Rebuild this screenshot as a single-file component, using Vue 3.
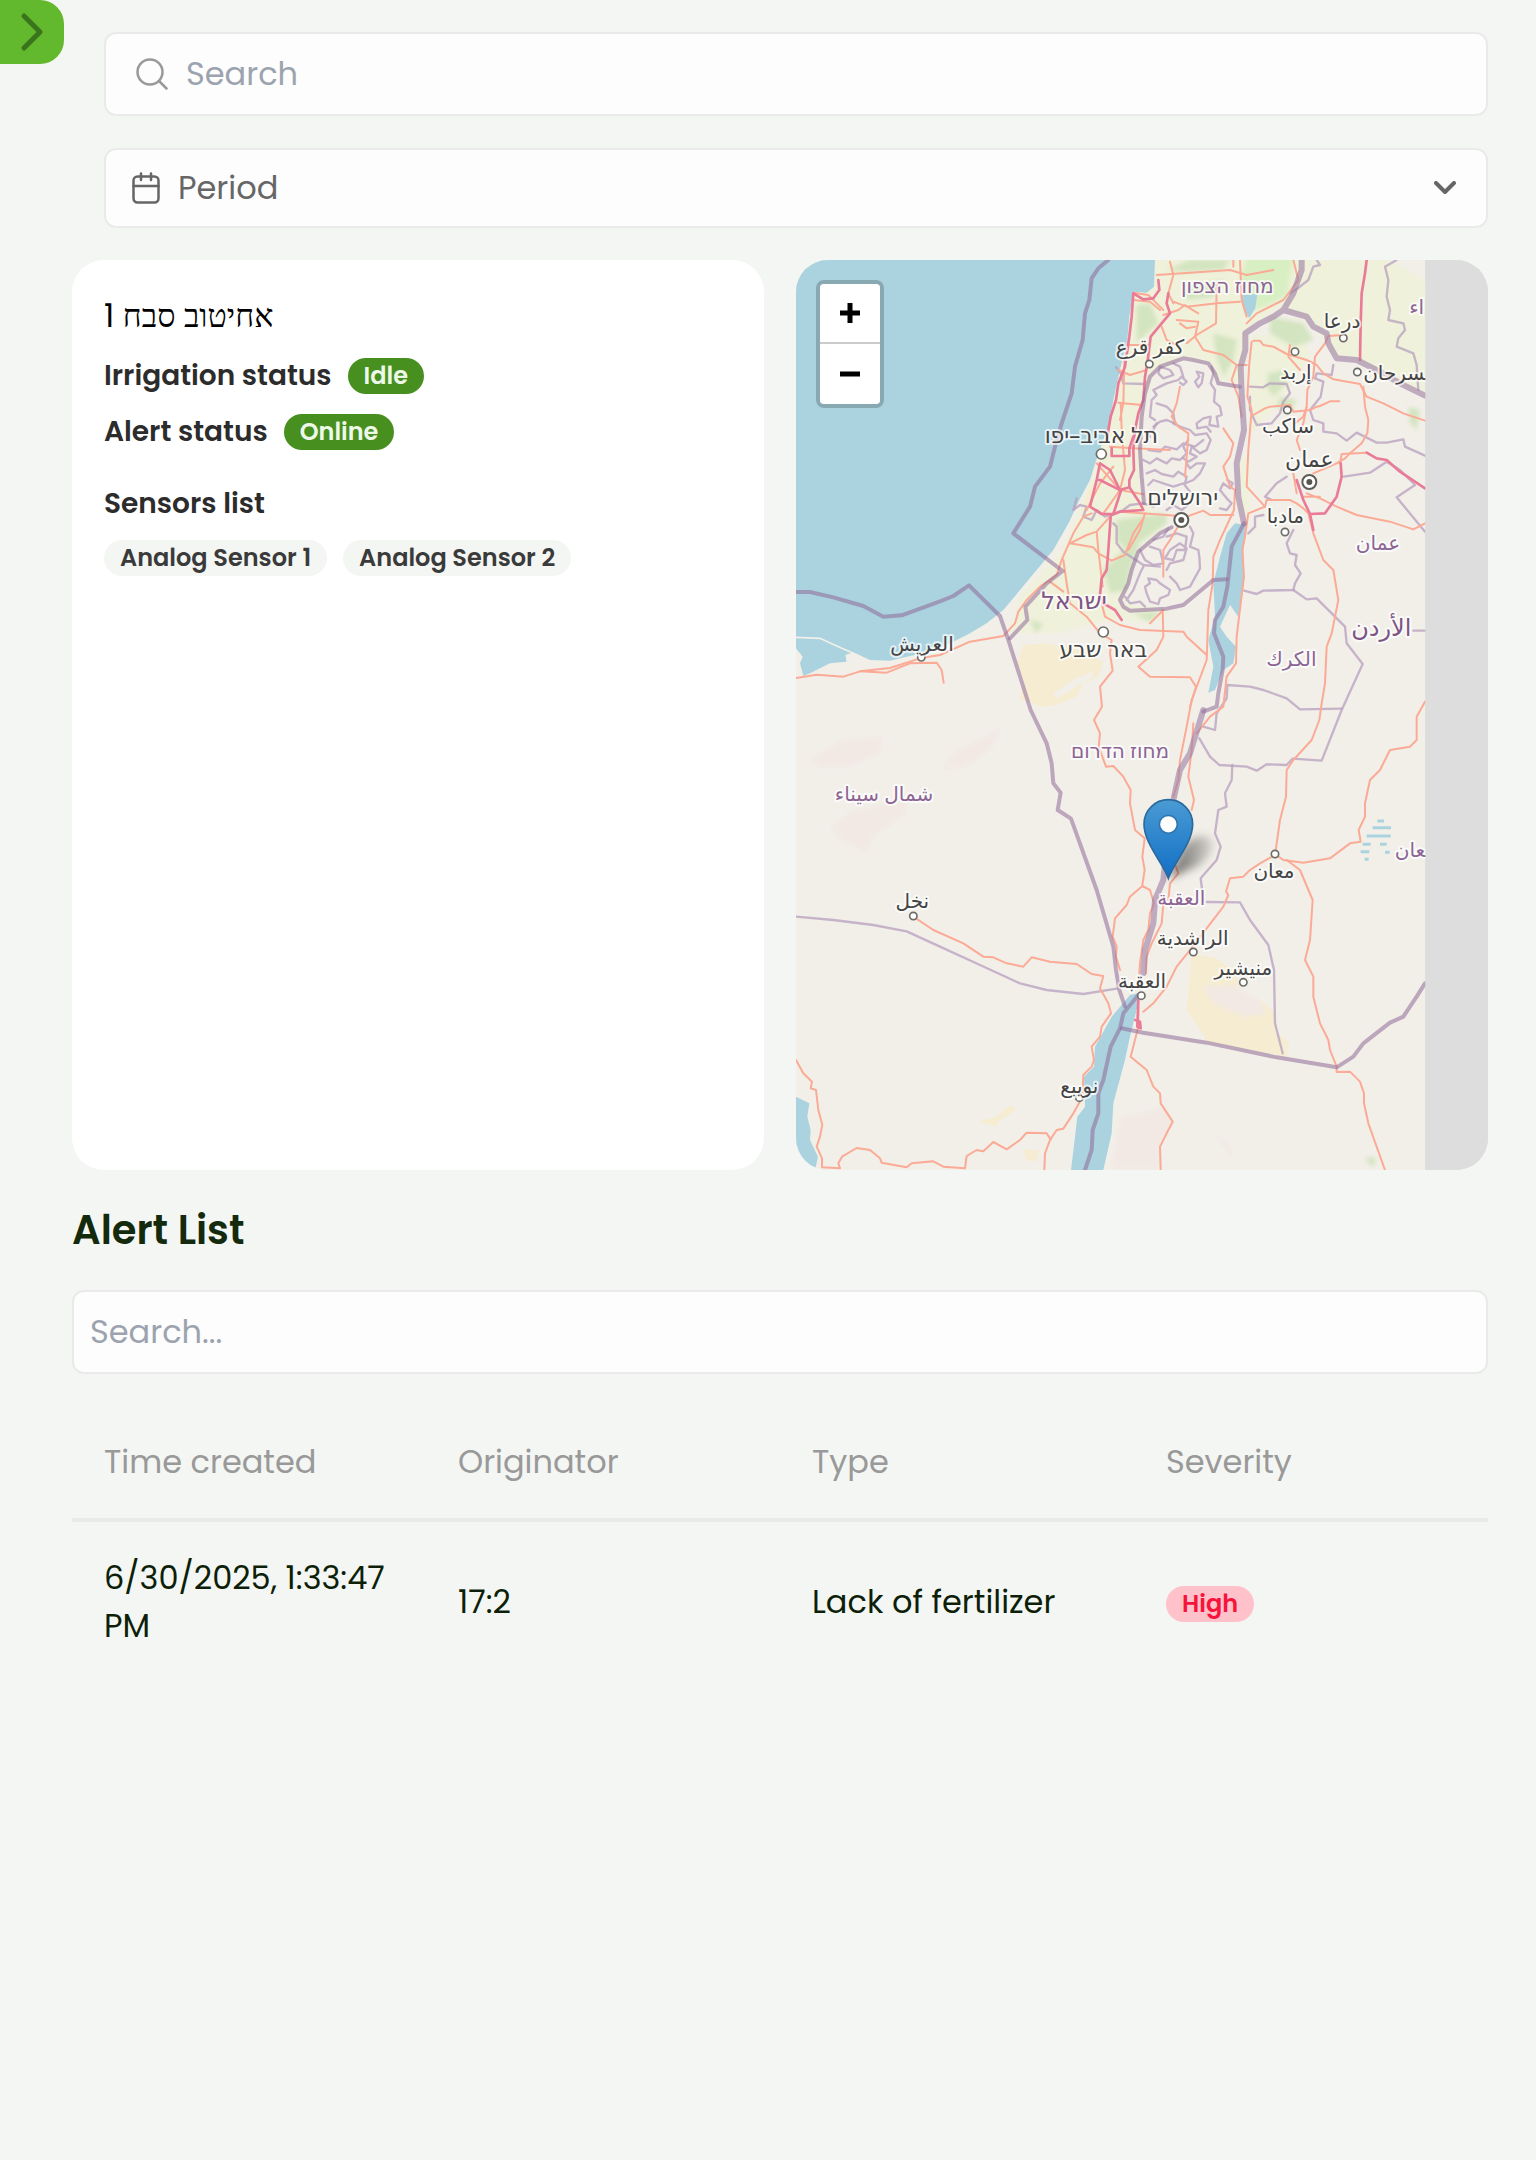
<script setup>
import { ref } from 'vue'

const query = ref('')
const alertQuery = ref('')
const period = ref('')

const sensors = ['Analog Sensor 1', 'Analog Sensor 2']
const columns = ['Time created', 'Originator', 'Type', 'Severity']
const alerts = [
  { time: '6/30/2025, 1:33:47 PM', originator: '17:2', type: 'Lack of fertilizer', severity: 'High' },
]

/* Map geometry, in the map's own drawing units */
const roads = [
  'M18 1284 L80 1274 L160 1280 L210 1264 L300 1254 L390 1225 L450 1215 L540 1175 L640 1158 L675 1120 L685 1085 L710 1050 L750 1010 L800 975 L815 930 L850 850 L880 800 L905 790',
  'M210 1264 L290 1268 L360 1240 L440 1238 L455 1260 L461 1298',
  'M1030 128 L1075 135 L1100 160 L1120 180 M1030 150 L1080 155 L1110 180',
  'M1012 285 L1080 285 M985 360 L1020 375 L1070 360 M1003 330 L1000 460 L990 510 M985 458 L1055 465 M992 460 L996 560 L1005 660 L990 720 L955 770 L940 790',
  'M960 590 L1030 595 L1140 600 M920 640 L990 720 L1060 733 M970 650 L930 700 L890 780 M840 880 L890 855 L920 845 L960 800',
  'M820 930 L830 1000 L840 1060 L890 1100 L930 1150 L965 1170 L960 1210 L968 1262 L930 1310 L936 1370 L912 1410 L930 1450 L926 1490 L948 1550 L970 1548 L1000 1580 L1022 1620 L1020 1660 L1035 1740 L1064 1765 L1057 1820 L1064 1860 L1057 1905',
  'M840 880 L910 892 L925 910 L965 932 L1005 915 L1030 850 L1060 805 M920 845 L925 900 L938 1010 M935 1060 L945 1100 L990 1125 L1050 1140 L1180 1145 L1190 1160 L1250 1215',
  'M780 995 L820 1025 M1080 1120 L1120 1080 M1118 1080 L1120 1160 L1100 1200 L1045 1250 L1080 1280 L1200 1282 L1218 1310 L1200 1370',
  'M1100 75 L1200 68 L1320 60 L1370 75 L1450 60 M1140 35 L1150 75 L1135 130 L1150 160 M1350 30 L1355 150 L1370 200 M1330 50 L1330 30',
  'M1150 155 L1190 170 L1280 160 L1350 155 M1120 195 L1165 180 L1185 165 L1200 175 L1225 190 M1160 210 L1225 215 L1215 260 M1170 220 L1190 235 L1215 230 M1280 100 L1278 220 L1220 255 L1190 280',
  'M1510 30 L1525 90 L1480 150 L1400 190 L1370 220',
  'M1115 230 L1130 270 L1170 290 M1215 260 L1240 300 L1300 315 L1340 345 L1370 345 M1340 345 L1325 390 L1345 440 L1355 500',
  'M1390 272 L1410 272 L1420 285 L1450 290 L1490 312 L1550 330 L1580 345 L1600 370 L1630 388 L1710 402 L1730 440 L1780 460 L1840 490 L1905 512',
  'M1385 275 L1378 340 L1372 440 L1385 480 L1375 600 L1370 710 L1425 770 L1375 790 L1365 860 L1357 900 L1362 980 L1352 1060 L1340 1160 L1338 1240 L1310 1280 L1300 1370 L1260 1400 L1220 1450',
  'M1658 255 L1615 258 L1605 280 L1575 320 L1570 380 L1552 420 L1550 470 L1540 520 L1520 570 L1530 600',
  'M1500 285 L1495 320 L1530 360 M1720 410 L1725 470 L1735 510 L1732 550 L1715 580 L1680 610 L1665 625 L1640 640 L1570 670',
  'M1390 495 L1425 475 L1440 470 L1500 465 L1510 485 L1560 480 L1580 470 L1590 468 L1620 454 L1648 454 M1550 470 L1540 500 L1515 520 M1510 670 L1520 730',
  'M1650 640 L1655 612 L1730 608 M1425 770 L1430 750 L1500 750 L1520 760 L1540 775 L1555 790 M1550 730 L1590 745 L1640 770 L1700 795 L1800 815 L1870 838 L1905 820 M1540 740 L1590 740',
  'M1000 786 L1130 795 L1190 800 L1240 782 L1260 795 L1330 795 M1300 535 L1330 580 L1320 620 L1300 650 L1320 710 L1335 720 L1332 780 L1290 870 L1270 920 L1268 1000 L1255 1080 L1250 1230 L1205 1350 M1205 1350 L1190 1430 L1170 1530 L1165 1590 L1150 1640',
  'M1170 410 L1160 460 L1145 500 L1165 530 L1195 550 L1190 620 L1185 680 M1170 820 L1140 870 L1120 900 L1120 980 M1065 790 L1050 840 L1015 900',
  'M1555 790 L1570 850 L1600 930 L1630 960 L1645 1050 L1625 1150 L1610 1190 L1605 1300 L1595 1360 L1588 1410 L1565 1470 L1510 1530 L1490 1560 L1488 1640 L1470 1710 L1455 1815 L1410 1840 L1380 1860 L1360 1880 L1320 1885 L1308 1925 L1315 1935 L1300 1970 L1250 2035 L1200 2100 L1160 2150 L1130 2210 L1090 2260 L1060 2285',
  'M1905 1355 L1880 1400 L1880 1470 L1860 1490 L1800 1500 L1770 1560 L1740 1590 L1725 1660 L1725 1700 L1706 1740 L1712 1775 L1680 1780 L1620 1825 L1540 1838 L1480 1830 L1455 1812',
  'M1490 1830 L1530 1860 L1568 1950 L1560 2070 L1545 2130 L1570 2180 L1570 2240 L1590 2320 L1615 2370 L1620 2400 L1640 2450 L1640 2466 L1680 2465 L1710 2495 L1722 2530 L1722 2560 L1735 2620 L1785 2760',
  'M370 2000 L430 2040 L520 2080 L580 2120 L610 2122 L650 2140 L700 2150 L725 2122 L780 2135 L860 2142 L905 2172 L940 2178 L930 2215 L955 2260 L963 2290 L935 2330 L930 2360 L905 2390 L912 2430 L905 2450 L880 2475 L878 2540 L850 2590 L820 2636 L800 2640 L780 2670 L765 2710 L763 2760',
  'M18 2430 L40 2470 L66 2495 L62 2515 L78 2520 L85 2580 L97 2625 L90 2660 L80 2690 L96 2725 L96 2752 L150 2755 L145 2740 L156 2720 L200 2694 L240 2700 L270 2725 L275 2738 L350 2752 L365 2740 L430 2734 L460 2750 L525 2755 L530 2718 L560 2700 L580 2704 L610 2676 L650 2698 L690 2670 L710 2648 L770 2650 L782 2668',
  'M1057 1908 L1020 1940 L1010 1965 L975 2005 L968 2060 L980 2090 L978 2120 L990 2160 M1057 1908 L1080 1920 L1092 1960 L1080 1990 L1075 2040 L1060 2070 L1050 2140 L1048 2170',
  'M1210 1420 L1205 1500 L1195 1580 L1212 1650 L1205 1680 M1150 1830 L1165 1870 L1140 1900 L1135 1950 M1120 1960 L1115 2020 L1085 2080 L1070 2120 L1068 2170',
  'M1045 2270 L1045 2330 L1022 2420 L1070 2460 L1090 2510 L1110 2530 L1112 2560 L1148 2615 L1135 2640 L1125 2660 L1110 2690 L1112 2760',
]
const motorways = [
  'M1030 130 L1025 200 L1018 260 L1005 350 L985 400 L978 450 L962 500 L950 570',
  'M1030 130 L1060 148 L1090 145 L1108 120 L1105 90 M930 640 L920 690 L900 770 L935 792 L970 792 L993 722 L930 690 L920 690 M930 640 L960 660 L990 720',
  'M1135 130 L1130 160 L1140 190 L1115 220 L1082 260 L1072 340 L1065 380 L1060 450 L1045 490 L1035 540 L1030 600 L1032 660 L1018 690 L1018 712 L990 720',
  'M1018 712 L1050 760 L1060 780 L990 785 L965 795 M962 800 L955 900 L950 960 L935 985 L930 1035 L940 1060 L975 1080 L995 1110 M965 595 L965 618 L1018 618 L1018 595 L1030 560',
  'M1730 30 L1725 70 L1715 130 L1712 220 L1710 330',
  'M1730 608 L1760 625 L1790 630 L1830 665 L1905 715 M1652 640 L1655 680 L1640 740 L1605 790 L1560 792 L1540 750 L1520 690 M1560 792 L1570 840',
  'M1045 2250 L1042 2330 L1052 2335 L1050 2315 L1036 2310',
]
const thinBorders = [
  'M978 352 L992 370 L1000 400 L1060 402 L1066 395 M860 745 L850 780 L870 765 L890 770 L880 800 L905 810 L920 780 L945 800 L1000 780 L1020 765 L1060 760 M970 820 L980 830 L980 880 L1000 905 L1060 945 L1110 950',
  'M1580 30 L1590 45 L1570 50 L1555 90 L1530 110 L1500 130 M1820 30 L1785 50 L1795 90 L1790 140 L1800 180 L1795 210 L1840 220 L1845 240 L1825 265 L1820 290 L1870 310 L1880 345 L1885 420',
  'M1380 410 L1420 412 L1440 400 L1490 402 L1500 430 L1480 455 L1470 490 L1445 520 L1400 525 L1380 480 L1380 440 M1630 345 L1625 375 L1580 370 L1575 385 L1600 395 L1592 440 L1560 480 L1570 510 L1600 520 L1600 545 L1640 550 L1670 572 L1700 548 L1760 578 L1790 578 L1840 568 L1845 590 L1905 617',
  'M1662 680 L1740 668 L1790 635 L1830 660 L1875 705 L1820 742 L1905 845',
  'M1490 680 L1460 700 L1425 740 L1445 750 M1375 850 L1395 830 L1395 800 L1420 795 M1510 840 L1490 880 L1500 910 L1520 915 L1515 945 L1532 970 L1515 1000 L1510 1020 L1420 1022 L1400 1032 L1362 1022',
  'M1510 1020 L1550 1048 L1580 1045 L1610 1075 L1665 1130 L1670 1180 L1718 1242 L1655 1380 L1595 1532 L1508 1526 L1490 1545 L1430 1543 L1400 1562 L1370 1550 L1288 1545 L1260 1520 L1228 1465',
  'M1870 1142 L1905 1142 M1240 1430 L1275 1440 L1280 1390 L1310 1345 L1312 1305 L1380 1310 L1420 1320 L1490 1345 L1530 1378 L1655 1376',
  'M1327 1545 L1325 1590 L1305 1630 L1310 1670 L1285 1680 L1275 1750 L1292 1790 L1280 1830 L1232 1885 L1240 1950 M1250 1956 L1350 1957 L1380 2010 L1435 2085 L1452 2160 L1455 2320 L1478 2410',
  'M18 2000 L130 2010 L250 2025 L350 2044 L450 2090 L570 2145 L690 2200 L770 2220 L880 2232 L980 2216',
  'M1085 450 L1100 435 L1090 420 L1110 410 L1130 400 L1165 390 L1175 380 L1190 395 L1180 405 L1170 398 M1100 460 L1130 470 L1150 490 L1155 520 L1130 510 L1110 515 L1090 530 M1085 450 L1080 500 L1095 510 M1110 350 L1140 360 L1150 375 L1120 385 L1105 370 Z M1150 340 L1170 350 L1180 380',
  'M1220 365 L1240 370 L1235 400 L1225 412 L1215 395 L1228 380 Z M1265 350 L1270 370 L1262 400 L1275 420 L1272 455 L1290 470 L1295 495 L1280 500 L1285 530 L1258 525 L1262 500 L1240 505 L1220 520 L1222 535 L1250 530 L1262 545',
  'M1150 520 L1170 530 L1200 540 L1215 555 L1250 550 L1262 570 L1250 600 L1230 610 L1205 590 L1200 610 L1220 620 L1195 635 L1180 625',
  'M1080 560 L1070 545 L1090 540 L1100 520 M1060 630 L1080 640 L1100 625 L1130 640 L1145 625 L1170 630 L1190 610 L1180 590 L1195 570 M1075 600 L1110 605 L1125 590 L1160 598 L1180 580 L1215 590 L1240 570',
  'M1070 670 L1095 660 L1115 672 L1150 680 L1165 665 L1190 680 L1185 700 L1210 690 L1230 670 L1245 640 L1220 640 L1200 655 L1190 640 M1075 705 L1090 690 L1120 700 L1150 710 L1180 700 L1200 725',
  'M1312 690 L1328 700 L1320 715 L1300 700 L1290 720 L1310 745 L1325 760 L1310 780 L1290 775 M1130 780 L1150 765 L1175 780 L1200 760 M1060 760 L1090 770 L1110 755',
  'M1200 830 L1210 850 L1200 890 L1225 900 L1228 920 L1230 955 L1200 1010 L1170 1020 L1160 1000 L1140 980 M1050 900 L1065 930 L1090 945 L1120 940 L1110 900 L1080 890 M1090 870 L1120 860 L1135 835',
  'M1130 860 L1160 850 L1190 860 L1185 900 L1160 900 L1150 930 L1125 925 L1140 900 L1170 880 L1190 895 L1180 930 L1140 940 L1130 960',
  'M1065 1010 L1080 1000 L1075 985 L1100 990 L1110 1000 L1140 1020 L1135 1035 L1110 1045 L1105 1062 L1080 1055 L1070 1030 Z M1010 1050 L1030 1020 L1050 970 L1060 950 M1005 1040 L1020 1060 L1050 1055 L1065 1070',
]
const borders = [
  'M955 30 L925 55 L905 85 L898 150 L885 190 L878 270 L855 350 L845 430 L815 520 L795 590 L780 650 L735 710 L720 770 L670 850 L818 963 L770 1000 L706 1070 L712 1110 L660 1165',
  'M18 1026 L60 1026 L130 1042 L220 1068 L280 1100 L335 1096 L450 1054 L490 1038 L537 1006 L630 1098 L655 1170 L722 1380 L770 1480 L785 1540 L790 1600 L812 1628 L803 1680 L843 1706 L920 1920 L970 2090 L978 2160 L988 2220 L1005 2270',
  'M1062 760 L1055 680 L1050 600 L1055 500 L1065 430 L1080 380 L1110 350 L1180 325 L1210 330 L1255 340 L1275 370 L1285 400 L1350 410',
  'M1145 832 L1110 850 L1045 905 L1025 960 L1015 1000 L990 1050 L1000 1070 L1020 1082 L1130 1076 L1180 1065 L1270 990 L1310 988',
  'M1045 2235 L1000 2290 L990 2335 L962 2390 L940 2490 L925 2530 L925 2590 L908 2640 L905 2700 L885 2760',
  'M995 2335 L1060 2348 L1250 2378 L1460 2422 L1640 2452 L1690 2420 L1720 2380 L1800 2318 L1840 2300 L1880 2240 L1905 2200',
]
const riverBorder =
  'M1535 30 L1535 60 L1510 130 L1480 180 L1450 200 L1410 220 L1366 250 L1366 300 L1352 350 L1355 430 L1362 540 L1340 640 L1345 740 L1362 820 M1480 180 L1550 200 L1570 230 L1610 250 L1615 280 L1640 325 L1700 330 L1780 370 L1830 400 L1905 437 M1240 1380 L1200 1510 L1170 1560 L1150 1650 L1130 1790 L1120 1890 L1095 1950 L1090 2020 L1065 2100 L1060 2170'
const seaBorder =
  'M1362 820 L1325 890 L1312 1010 L1300 1070 L1275 1110 L1272 1150 L1300 1220 L1298 1260 L1285 1330 L1280 1370 L1240 1385'

const places = [
  { name: 'מחוז הצפון', x: 1312, y: 130, kind: 'region' },
  { name: 'درعا', x: 1656, y: 235, kind: 'town' },
  { name: 'اء', x: 1880, y: 192, kind: 'region' },
  { name: 'كفر قرع', x: 1080, y: 312, kind: 'town' },
  { name: 'إربد', x: 1518, y: 388, kind: 'town' },
  { name: 'السرحان', x: 1830, y: 390, kind: 'town' },
  { name: 'ساكب', x: 1494, y: 548, kind: 'town' },
  { name: 'תל אביב–יפו', x: 934, y: 580, kind: 'city' },
  { name: 'عمان', x: 1558, y: 652, kind: 'city' },
  { name: 'ירושלים', x: 1178, y: 764, kind: 'city' },
  { name: 'مادبا', x: 1486, y: 820, kind: 'town' },
  { name: 'عمان', x: 1764, y: 900, kind: 'region' },
  { name: 'ישראל', x: 852, y: 1078, kind: 'country' },
  { name: 'الأردن', x: 1774, y: 1158, kind: 'country' },
  { name: 'באר שבע', x: 940, y: 1222, kind: 'city' },
  { name: 'العريش', x: 396, y: 1204, kind: 'town' },
  { name: 'الكرك', x: 1504, y: 1248, kind: 'region' },
  { name: 'מחוז הדרום', x: 990, y: 1524, kind: 'region' },
  { name: 'شمال سيناء', x: 282, y: 1654, kind: 'region' },
  { name: 'معان', x: 1452, y: 1884, kind: 'town' },
  { name: 'معان', x: 1876, y: 1822, kind: 'region' },
  { name: 'العقبة', x: 1174, y: 1964, kind: 'region' },
  { name: 'نخل', x: 367, y: 1974, kind: 'town' },
  { name: 'الراشدية', x: 1208, y: 2084, kind: 'town' },
  { name: 'منيشير', x: 1360, y: 2174, kind: 'town' },
  { name: 'العقبة', x: 1056, y: 2214, kind: 'town' },
  { name: 'نويبع', x: 868, y: 2528, kind: 'town' },
]
const dots = [
  [1660, 264, 11], [1515, 305, 11], [1078, 342, 11], [1702, 366, 11], [1492, 480, 11],
  [934, 612, 15], [1485, 846, 11], [940, 1146, 15], [394, 1222, 11], [1455, 1812, 11],
  [370, 1998, 11], [1210, 2106, 11], [1360, 2197, 11], [1054, 2237, 11], [868, 2543, 11],
]
const capitals = [[1558, 696], [1174, 810]]
const woods = [
  'M1040 165 L1080 160 L1105 220 L1070 250 L1040 280 Z',
  'M1130 60 L1200 30 L1320 30 L1300 60 L1180 65 Z',
  'M1180 110 L1300 90 L1270 140 L1190 150 Z',
  'M940 960 L1000 900 L1050 880 L1020 960 L1010 1020 L960 1030 Z',
  'M980 810 L1130 790 L1130 820 L1060 870 L1010 900 L980 870 Z',
  'M1440 200 L1540 220 L1570 270 L1510 290 L1440 250 Z',
  'M1435 370 L1480 360 L1490 400 L1450 440 L1430 410 Z',
  'M1470 440 L1520 450 L1500 490 L1460 470 Z',
  'M1270 250 L1340 270 L1330 330 L1300 380 L1280 320 Z',
  'M1030 1090 L1110 1085 L1080 1115 Z',
  'M1855 470 L1890 480 L1880 540 L1860 520 Z',
  'M1725 2725 L1758 2720 L1750 2755 Z',
  'M720 1110 L760 1120 L740 1150 Z',
]
</script>

<template>
  <main class="page">
    <button class="drawer-toggle" type="button" aria-label="Open menu">
      <svg viewBox="0 0 64 64" width="64" height="64" aria-hidden="true">
        <path d="M24 16 L40 32 L24 48" />
      </svg>
    </button>

    <div class="filters">
      <label class="field">
        <svg class="icon-search" viewBox="0 0 64 64" aria-hidden="true">
          <circle cx="28" cy="28" r="25" />
          <path d="M46 46 L61 61" />
        </svg>
        <input v-model="query" type="text" placeholder="Search" aria-label="Search" />
      </label>
      <label class="field field-select">
        <svg class="icon-calendar" viewBox="0 0 56 64" aria-hidden="true">
          <rect x="3" y="9" width="50" height="52" rx="8" />
          <path d="M3 28 H53 M18 3 V16 M38 3 V16" />
        </svg>
        <select v-model="period" aria-label="Period">
          <option value="">Period</option>
        </select>
        <svg class="icon-chevron" viewBox="0 0 22 14" aria-hidden="true">
          <path d="M2 2 L11 11 L20 2" />
        </svg>
      </label>
    </div>

    <div class="overview">
      <section class="card">
        <h2 class="device">אחיטוב סבח 1</h2>
        <div class="status"><span>Irrigation status</span><span class="badge badge-ok">Idle</span></div>
        <div class="status"><span>Alert status</span><span class="badge badge-ok">Online</span></div>
        <h3 class="sensors-title">Sensors list</h3>
        <div class="sensors">
          <span v-for="s in sensors" :key="s" class="badge badge-muted">{{ s }}</span>
        </div>
      </section>

      <section class="map" aria-label="Map">
        <svg class="map-canvas" viewBox="18 30 2076 2730" preserveAspectRatio="xMinYMin slice" role="img" aria-label="Device location">
          <defs>
            <linearGradient id="pin" x1="0" y1="0" x2="0" y2="1">
              <stop offset="0" stop-color="#4a9bd3" />
              <stop offset="1" stop-color="#126fc6" />
            </linearGradient>
            <linearGradient id="shade" x1="0" y1="0" x2="1" y2="0">
              <stop offset="0" stop-color="#000" stop-opacity="0.6" />
              <stop offset="1" stop-color="#000" stop-opacity="0.1" />
            </linearGradient>
            <filter id="soft" x="-50%" y="-50%" width="200%" height="200%"><feGaussianBlur stdDeviation="12" /></filter>
            <filter id="haze" x="-20%" y="-20%" width="140%" height="140%"><feGaussianBlur stdDeviation="7" /></filter>
          </defs>
          <rect x="18" y="30" width="1888" height="2730" fill="#f2efe9" />

          <g fill="#eff1da" filter="url(#haze)">
            <path d="M1030 125 L1090 20 L1540 20 L1500 150 L1370 240 L1360 400 L1280 390 L1250 335 L1180 320 L1090 370 L1055 500 L1050 720 L1130 830 L1040 900 L1000 1060 L1150 1080 L1080 1120 L960 1110 L800 1150 L660 1150 L690 1040 L820 900 L900 700 L960 500 Z" />
            <path d="M1540 20 L1780 20 L1905 90 V430 L1800 390 L1700 330 L1640 320 L1570 220 L1480 180 Z" />
            <path d="M1380 260 L1540 240 L1560 320 L1480 440 L1380 560 Z M1345 620 H1375 L1380 800 L1350 790 Z" />
          </g>
          <path d="M1370 20 L1510 20 L1490 140 L1400 180 L1350 100 Z" fill="#d8efc3" filter="url(#haze)" />
          <g fill="#d3e4c0" filter="url(#haze)"><path v-for="d in woods" :key="d" :d="d" /></g>
          <g fill="#f6ecd1">
            <path d="M700 1185 L770 1180 L870 1200 L940 1235 L925 1280 L880 1300 L860 1340 L800 1365 L750 1370 L720 1355 L690 1350 L700 1290 L680 1240 Z" />
            <path d="M1205 2115 L1270 2120 L1330 2160 L1360 2240 L1420 2255 L1455 2290 L1460 2350 L1497 2375 L1490 2420 L1250 2375 L1225 2330 L1190 2280 Z" />
            <path d="M895 720 L920 690 L905 770 L870 800 Z M565 2615 L620 2600 L660 2565 L680 2580 L630 2610 L620 2630 Z M700 2700 L745 2700 L740 2735 L710 2730 Z" />
          </g>
          <path d="M790 1330 L850 1290 L905 1265 L910 1280 L860 1310 L800 1345 Z" fill="#f2efe9" />
          <g fill="#f2e9e4" filter="url(#haze)">
            <path d="M60 1530 L150 1470 L280 1460 L270 1510 L180 1550 L90 1555 Z M450 1560 L500 1500 L640 1430 L600 1500 L530 1550 Z M120 1730 L190 1680 L350 1650 L350 1690 L250 1760 L230 1810 L150 1770 Z" />
            <path d="M990 2600 L1130 2570 L1150 2620 L1110 2690 V2760 H960 Z M1265 2645 L1320 2680 L1330 2730 Z" />
            <path d="M1240 2210 L1330 2205 L1410 2250 L1430 2290 L1360 2300 L1270 2260 Z" />
          </g>

          <g fill="#aad3df">
            <path d="M18 30 H1095 L1092 110 L1070 128 L1030 125 L1018 200 L1012 270 L992 350 L972 440 L955 530 L922 620 L900 690 L868 750 L838 815 L790 900 L740 960 L690 1020 L640 1080 L590 1120 L540 1150 L490 1175 L440 1200 L350 1220 L300 1232 L240 1230 L190 1207 L166 1215 L170 1235 L120 1240 L60 1270 L40 1278 L30 1240 L38 1220 L18 1195 Z" />
            <path d="M1335 820 L1370 825 L1360 900 L1362 1000 L1345 1100 L1320 1065 L1290 1130 L1310 1160 L1338 1190 L1330 1240 L1300 1260 L1275 1320 L1255 1328 L1270 1250 L1255 1170 L1275 1100 L1270 1000 L1290 920 L1310 850 Z" />
            <path d="M1352 135 L1402 132 L1396 175 L1378 204 L1362 182 Z" />
            <path d="M1045 2230 L1020 2235 L965 2300 L915 2390 L912 2450 L882 2480 L885 2570 L862 2600 L855 2660 L843 2760 H940 L965 2650 L970 2560 L1005 2430 L1020 2360 L1042 2270 Z" />
            <path d="M18 2540 L58 2560 L52 2600 L62 2640 L60 2670 L84 2720 L75 2760 H18 Z" />
          </g>
          <path d="M18 1162 L90 1165 L140 1188 L190 1210" fill="none" stroke="#f2efe9" stroke-width="5" />
          <path d="M1762 1713 h20 M1748 1733 h55 M1730 1758 h72 M1718 1783 h24 M1770 1783 h20 M1712 1805 h26 M1785 1807 h14 M1724 1828 h12" stroke="#aad3df" stroke-width="9" fill="none" />

          <g class="lines">
            <path v-for="d in thinBorders" :key="d" :d="d" stroke="#b79fbd" stroke-opacity="0.75" stroke-width="7" />
            <path v-for="d in roads" :key="d" :d="d" stroke="#fbaa95" stroke-width="6" />
            <path v-for="d in motorways" :key="d" :d="d" stroke="#ea7b97" stroke-width="8" />
            <path v-for="d in borders" :key="d" :d="d" stroke="#8f6a98" stroke-opacity="0.55" stroke-width="12" />
            <path :d="riverBorder" stroke="#9c7da3" stroke-opacity="0.6" stroke-width="18" />
            <path :d="seaBorder" stroke="#8f6a98" stroke-opacity="0.55" stroke-width="12" />
          </g>

          <g fill="#fff" stroke="#6d6d68" stroke-width="5">
            <circle v-for="d in dots" :key="d.join()" :cx="d[0]" :cy="d[1]" :r="d[2]" />
          </g>
          <g v-for="c in capitals" :key="c.join()">
            <circle :cx="c[0]" :cy="c[1]" r="21" fill="#fff" stroke="#5d5d58" stroke-width="6" />
            <circle :cx="c[0]" :cy="c[1]" r="9" fill="#575752" />
          </g>
          <text v-for="(p, i) in places" :key="i" :x="p.x" :y="p.y" class="place" :class="p.kind">{{ p.name }}</text>

          <rect x="1906" y="30" width="188" height="2730" fill="#ddd" />

          <path d="M1135 1885 L1180 1790 Q1220 1745 1262 1765 Q1290 1800 1220 1850 Z" fill="url(#shade)" filter="url(#soft)" />
          <path d="M1135 1885 C1120 1840 1062 1780 1062 1722 A73 73 0 0 1 1208 1722 C1208 1780 1150 1840 1135 1885 Z" fill="url(#pin)" stroke="#2b6a9e" stroke-width="5" />
          <circle cx="1135" cy="1723" r="27" fill="#fff" stroke="#2f76b0" stroke-width="5" />
        </svg>
        <div class="zoom">
          <button type="button" aria-label="Zoom in"><svg viewBox="0 0 20 20" aria-hidden="true"><path d="M0 10 H20 M10 0 V20" /></svg></button>
          <button type="button" aria-label="Zoom out"><svg viewBox="0 0 20 20" aria-hidden="true"><path d="M0 10 H20" /></svg></button>
        </div>
      </section>
    </div>

    <section class="alerts">
      <h1>Alert List</h1>
      <div class="field field-alert">
        <input v-model="alertQuery" type="text" placeholder="Search..." aria-label="Search alerts" />
      </div>
      <table>
        <thead>
          <tr><th v-for="c in columns" :key="c" scope="col">{{ c }}</th></tr>
        </thead>
        <tbody>
          <tr v-for="a in alerts" :key="a.time">
            <td>{{ a.time }}</td>
            <td>{{ a.originator }}</td>
            <td>{{ a.type }}</td>
            <td><span class="badge badge-high">{{ a.severity }}</span></td>
          </tr>
        </tbody>
      </table>
    </section>
  </main>
</template>

<style>
body {
  margin: 0;
  background: #f4f6f3;
}
</style>

<style scoped>
* {
  box-sizing: border-box;
}
.page {
  position: relative;
  min-height: 100vh;
  padding: 32px 48px 32px 72px;
  background: #f4f6f3;
  font-family: Poppins, Inter, "Liberation Sans", sans-serif;
  font-size: 32px;
  line-height: 48px;
  color: #0d1f08;
}
.drawer-toggle {
  position: absolute;
  top: 0;
  left: 0;
  width: 64px;
  height: 64px;
  padding: 0;
  border: 0;
  border-radius: 0 24px 24px 0;
  background: #62b92d;
}
.drawer-toggle svg {
  display: block;
  fill: none;
  stroke: #3a741b;
  stroke-width: 5;
  stroke-linecap: round;
  stroke-linejoin: round;
}
.filters {
  display: flex;
  flex-direction: column;
  gap: 32px;
  padding-left: 32px;
}
.field {
  display: flex;
  align-items: center;
  height: 84px;
  border: 2px solid #e9eae9;
  border-radius: 12px;
  background: #fdfdfd;
  padding: 0 30px;
}
.field-select {
  height: 80px;
  padding-left: 26px;
}
.field-alert {
  padding: 0 16px;
}
.field svg {
  flex: none;
  fill: none;
  stroke-width: 5;
  stroke-linecap: round;
  stroke-linejoin: round;
}
.icon-search {
  width: 32px;
  height: 32px;
  margin-right: 18px;
  stroke: #999;
}
.icon-calendar {
  width: 28px;
  height: 32px;
  margin-right: 18px;
  stroke: #666;
}
.field .icon-chevron {
  width: 22px;
  height: 14px;
  stroke: #666;
  stroke-width: 4;
}
.field input,
.field select {
  flex: 1;
  min-width: 0;
  height: 48px;
  padding: 0;
  border: 0;
  outline: 0;
  background: transparent;
  font: inherit;
  color: #666;
}
.field select {
  appearance: none;
}
.field input::placeholder {
  color: #9ca3af;
  opacity: 1;
}
.overview {
  display: grid;
  grid-template-columns: 1fr 1fr;
  gap: 32px;
  margin-top: 32px;
  min-height: 910px;
}
.card {
  padding: 32px;
  border-radius: 32px;
  background: #fff;
  color: #2c2c2c;
  font-size: 28px;
  font-weight: 600;
  line-height: 40px;
}
.device {
  margin: 0 0 16px;
  font-family: Poppins, Inter, "Liberation Serif", serif;
  font-size: 32px;
  font-weight: 400;
  line-height: 48px;
  color: #000;
}
.status {
  display: flex;
  align-items: center;
  gap: 16px;
  margin-bottom: 16px;
}
.sensors-title {
  margin: 32px 0 16px;
  font-size: 28px;
  font-weight: 600;
  line-height: 40px;
}
.sensors {
  display: flex;
  flex-wrap: wrap;
  gap: 16px;
}
.badge {
  display: inline-block;
  padding: 0 16px;
  border-radius: 18px;
  font-size: 24px;
  font-weight: 600;
  line-height: 36px;
}
.badge-ok {
  background: #478f1f;
  color: #eef8e8;
}
.badge-muted {
  background: #f4f6f3;
  color: #3a3a3a;
}
.badge-high {
  background: #ffc2cb;
  color: #f5143a;
}
.map {
  position: relative;
  overflow: hidden;
  border-radius: 32px;
  background: #ddd;
}
.map-canvas {
  display: block;
  width: 100%;
  height: 100%;
}
.lines {
  fill: none;
  stroke-linejoin: round;
  stroke-linecap: round;
}
.place {
  font-family: "Noto Sans", "DejaVu Sans", sans-serif;
  font-size: 60px;
  fill: #444;
  text-anchor: middle;
  paint-order: stroke;
  stroke: #fff;
  stroke-opacity: 0.7;
  stroke-width: 12px;
  stroke-linejoin: round;
}
.place.region {
  fill: #8d6594;
}
.place.city {
  font-size: 66px;
}
.place.country {
  font-size: 72px;
  fill: #7d5585;
}
.zoom {
  position: absolute;
  top: 20px;
  left: 20px;
  border: 4px solid rgba(0, 0, 0, 0.2);
  border-radius: 8px;
  background-clip: padding-box;
}
.zoom button {
  display: flex;
  align-items: center;
  justify-content: center;
  width: 60px;
  height: 60px;
  padding: 0;
  border: 0;
  border-radius: 0 0 4px 4px;
  background: #fff;
}
.zoom button:first-child {
  border-bottom: 2px solid #ccc;
  border-radius: 4px 4px 0 0;
}
.zoom svg {
  width: 20px;
  height: 20px;
  stroke: #000;
  stroke-width: 5;
}
.alerts h1 {
  margin: 30px 0;
  font-size: 40px;
  font-weight: 600;
  line-height: 60px;
  color: #142a0c;
}
table {
  width: 100%;
  margin-top: 32px;
  border-collapse: collapse;
  table-layout: fixed;
}
th,
td {
  padding: 32px;
  text-align: left;
  vertical-align: middle;
  font-weight: 400;
}
th {
  border-bottom: 4px solid #e9eae9;
  color: #999;
}
td .badge {
  vertical-align: middle;
}
</style>
